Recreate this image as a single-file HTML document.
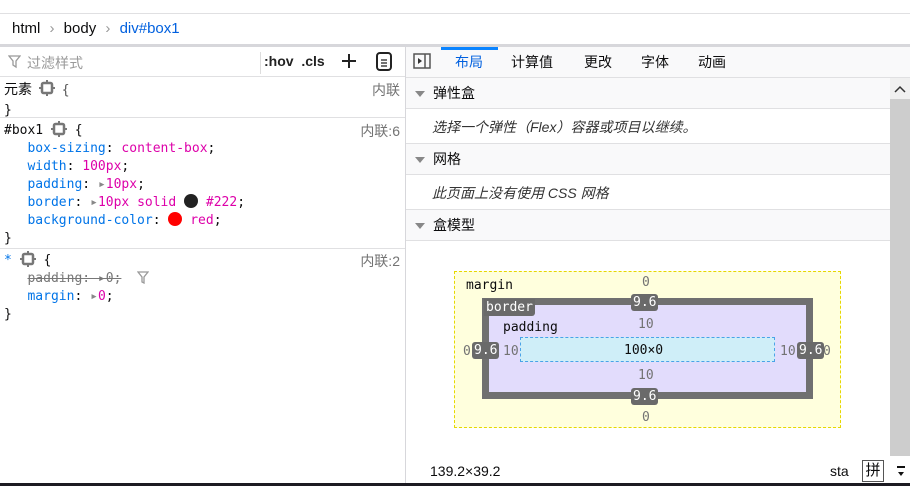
<!DOCTYPE html>
<html><head><meta charset="utf-8"><style>
*{box-sizing:border-box;margin:0;padding:0}
body{width:910px;height:486px;overflow:hidden;background:#fff;font-family:"Liberation Sans","Noto Sans CJK SC",sans-serif;font-size:14px;color:#0c0c0d;position:relative}
.a{position:absolute}
.mono{font-family:"DejaVu Sans Mono","Liberation Mono","Noto Sans CJK SC",monospace;font-size:13px}
.p{color:#0074e8}.v{color:#dd00a9}.g{color:#737373}
.hd{background:#f9f9fa;border-bottom:1px solid #e0e0e2;}
.tri{display:inline-block;width:0;height:0;border-left:5px solid transparent;border-right:5px solid transparent;border-top:6px solid #888;margin:0 8px 1px 9px}
.badge{position:absolute;background:#6a6a6a;color:#fff;border-radius:3px;font-family:"DejaVu Sans Mono","Liberation Mono",monospace;font-size:13px;padding:0 2px;line-height:17px}
.n{position:absolute;font-family:"DejaVu Sans Mono","Liberation Mono",monospace;font-size:13px;color:#737373}
</style></head><body>
<svg width="0" height="0" style="position:absolute"><defs><g id="gr"><rect x="3" y="3" width="10" height="10" rx="1.5" fill="none" stroke="#777" stroke-width="2.5"/><path d="M8 0v3M8 13v3M0 8h3M13 8h3" stroke="#777" stroke-width="2"/></g></defs></svg>
<div class="a" style="top:13px;left:0;width:910px;height:1px;background:#e0e0e2"></div>
<div class="a" style="top:20px;left:12px;font-size:15px;color:#0c0c0d">html <span style="color:#999;margin:0 5px">›</span> body <span style="color:#999;margin:0 5px">›</span> <span style="color:#0060df">div#box1</span></div>
<div class="a" style="top:44px;left:0;width:910px;height:3px;background:#d7d7db"></div>
<div class="a" style="top:47px;left:0;width:405px;height:30px;border-bottom:1px solid #e0e0e2"></div>
<svg class="a" style="top:55px;left:8px" width="13" height="14"><path d="M1 1h11L8 6v6l-3-2V6z" fill="none" stroke="#999" stroke-width="1.3"/></svg>
<div class="a" style="top:53px;left:27px;color:#999;font-size:14px">过滤样式</div>
<div class="a" style="top:52px;left:260px;width:1px;height:22px;background:#ddd"></div>
<div class="a" style="top:53px;left:264px;font-weight:bold;font-size:14px;color:#222">:hov &nbsp;.cls</div>
<svg class="a" style="top:53px;left:341px" width="16" height="16"><path d="M8 1v14M1 8h14" stroke="#222" stroke-width="2"/></svg>
<svg class="a" style="top:52px;left:376px" width="17" height="19"><rect x="1" y="1" width="14" height="17" rx="3" fill="none" stroke="#222" stroke-width="2"/><path d="M5 8h6M5 11h6M5 14h6" stroke="#222" stroke-width="1.3"/></svg>
<div class="a" style="top:47px;left:405px;width:1px;height:439px;background:#d7d7db"></div>
<div class="a" style="top:80px;left:4px;line-height:18px">元素 <svg width="16" height="16" style="vertical-align:-2px;margin:0 3px"><use href="#gr"/></svg> <span class="mono" style="color:#555">{</span><br><span class="mono">}</span></div>
<div class="a g" style="top:80px;right:510px">内联</div>
<div class="a" style="top:117px;left:0;width:405px;height:1px;background:#e0e0e2"></div>
<div class="a mono" style="top:121px;left:4px;line-height:18px;white-space:pre">#box1 <svg width="16" height="16" style="vertical-align:-3px"><use href="#gr"/></svg> {
   <span class="p">box-sizing</span>: <span class="v">content-box</span>;
   <span class="p">width</span>: <span class="v">100px</span>;
   <span class="p">padding</span>: <span style="color:#888">▸</span><span class="v">10px</span>;
   <span class="p">border</span>: <span style="color:#888">▸</span><span class="v">10px solid</span> <span style="display:inline-block;width:14px;height:14px;border-radius:50%;background:#222;vertical-align:-2px"></span> <span class="v">#222</span>;
   <span class="p">background-color</span>: <span style="display:inline-block;width:14px;height:14px;border-radius:50%;background:red;vertical-align:-2px"></span> <span class="v">red</span>;
}</div>
<div class="a g" style="top:121px;right:510px">内联:6</div>
<div class="a" style="top:248px;left:0;width:405px;height:1px;background:#e0e0e2"></div>
<div class="a mono" style="top:251px;left:4px;line-height:18px;white-space:pre"><span class="p">*</span> <svg width="16" height="16" style="vertical-align:-3px"><use href="#gr"/></svg> {
   <span style="text-decoration:line-through;color:#777">padding: ▸0;</span>  <svg width="12" height="13" style="vertical-align:-2px"><path d="M1 1h10L7 6v6L5 11V6z" fill="none" stroke="#999" stroke-width="1.3"/></svg>
   <span class="p">margin</span>: <span style="color:#888">▸</span><span class="v">0</span>;
}</div>
<div class="a g" style="top:251px;right:510px">内联:2</div>
<div class="a" style="top:47px;left:406px;width:504px;height:31px;background:#f9f9fa;border-bottom:1px solid #e0e0e2"></div>
<div class="a" style="top:47px;left:441px;width:57px;height:3px;background:#0a84ff"></div>
<svg class="a" style="top:53px;left:413px" width="19" height="17"><rect x="1" y="1" width="16" height="14" fill="none" stroke="#555" stroke-width="1.5"/><path d="M12 1v14" stroke="#555" stroke-width="1.5"/><path d="M5 5l4 3-4 3z" fill="#333"/></svg>
<div class="a" style="top:52px;left:455px;font-size:14px;color:#0060df">布局</div>
<div class="a" style="top:52px;left:511px;font-size:14px">计算值</div>
<div class="a" style="top:52px;left:584px;font-size:14px">更改</div>
<div class="a" style="top:52px;left:641px;font-size:14px">字体</div>
<div class="a" style="top:52px;left:698px;font-size:14px">动画</div>
<div class="a hd" style="top:78px;left:406px;width:484px;height:31px;line-height:30px"><span class="tri"></span>弹性盒</div>
<div class="a" style="top:117px;left:432px;font-style:italic;color:#333">选择一个弹性（Flex）容器或项目以继续。</div>
<div class="a" style="top:143px;left:406px;width:484px;height:1px;background:#e0e0e2"></div>
<div class="a hd" style="top:144px;left:406px;width:484px;height:31px;line-height:30px"><span class="tri"></span>网格</div>
<div class="a" style="top:183px;left:432px;font-style:italic;color:#333">此页面上没有使用 CSS 网格</div>
<div class="a" style="top:209px;left:406px;width:484px;height:1px;background:#e0e0e2"></div>
<div class="a hd" style="top:210px;left:406px;width:484px;height:31px;line-height:30px"><span class="tri"></span>盒模型</div>
<div class="a" style="top:78px;left:890px;width:20px;height:378px;background:#f0f0f0"></div>
<div class="a" style="top:99px;left:890px;width:20px;height:357px;background:#cdcdcd"></div>
<svg class="a" style="top:85px;left:894px" width="12" height="8"><path d="M1 7l5-5 5 5" fill="none" stroke="#333" stroke-width="1.5"/></svg>
<div class="a" style="top:271px;left:454px;width:387px;height:157px;background:#ffffdd;border:1px dashed #e6d800"></div>
<div class="a" style="top:298px;left:482px;width:331px;height:101px;background:#e2dcfc;border:7px solid #707070"></div>
<div class="a" style="top:337px;left:520px;width:255px;height:25px;background:#cfeef8;border:1px dashed #4aa3e8"></div>
<div class="a mono" style="top:278px;left:466px">margin</div>
<div class="badge" style="top:299px;left:484px;border-radius:0 0 3px 0">border</div>
<div class="a mono" style="top:320px;left:503px">padding</div>
<div class="a mono" style="top:343px;left:624px">100×0</div>
<div class="n" style="top:275px;left:642px">0</div>
<div class="n" style="top:410px;left:642px">0</div>
<div class="n" style="top:317px;left:638px">10</div>
<div class="n" style="top:368px;left:638px">10</div>
<div class="n" style="top:344px;left:463px">0</div>
<div class="n" style="top:344px;left:503px">10</div>
<div class="n" style="top:344px;left:780px">10</div>
<div class="n" style="top:344px;left:823px">0</div>
<div class="badge" style="top:294px;left:631px">9.6</div>
<div class="badge" style="top:388px;left:631px">9.6</div>
<div class="badge" style="top:342px;left:472px">9.6</div>
<div class="badge" style="top:342px;left:797px">9.6</div>
<div class="a" style="top:463px;left:430px;font-size:14px">139.2×39.2</div>
<div class="a" style="top:463px;left:830px;font-size:14px">sta</div>
<div class="a" style="top:456px;left:852px;width:58px;height:27px;background:#fff"></div>
<div class="a" style="top:460px;left:862px;width:22px;height:22px;border:1px solid #555;font-size:15px;text-align:center;line-height:20px">拼</div>
<svg class="a" style="top:465px;left:896px" width="10" height="13"><path d="M1 2h8" stroke="#111" stroke-width="2"/><path d="M2 7h6l-3 4z" fill="#111"/></svg>
<div class="a" style="top:483px;left:0;width:910px;height:3px;background:#1c1b22"></div>
</body></html>
